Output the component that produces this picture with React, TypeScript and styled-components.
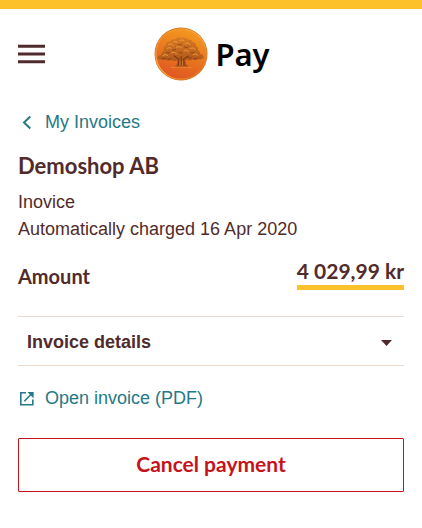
import React from "react";
import styled, { createGlobalStyle } from "styled-components";

const color = {
  brown: "#512b2b",
  teal: "#257886",
  yellow: "#fdc12b",
  sand: "#ebd9cc",
  red: "#c5131c",
};

const heading = `"Lato", "Open Sans", sans-serif`;
const body = `"Liberation Sans", Arial, sans-serif`;

const GlobalStyle = createGlobalStyle`
  *, *::before, *::after { box-sizing: border-box; }
  body {
    margin: 0;
    background: #fff;
    color: ${color.brown};
    font-family: ${body};
    font-size: 18px;
    line-height: 27px;
  }
`;

const Page = styled.div`
  border-top: 9px solid ${color.yellow};
`;

const Header = styled.header`
  display: grid;
  grid-template-columns: 28px 1fr 26px;
  align-items: center;
  padding: 18px 18px 0;
`;

const MenuButton = styled.button`
  display: flex;
  padding: 0;
  border: 0;
  background: none;
  cursor: pointer;
`;

const Brand = styled.a`
  display: flex;
  align-items: center;
  justify-content: center;
  gap: 7px;
  color: #000;
  font: 600 31px/54px "Noto Sans", "Open Sans", sans-serif;
  text-decoration: none;
`;

const Main = styled.main`
  padding: 28px 18px 36px;
`;

const IconLink = styled.a`
  display: flex;
  align-items: center;
  gap: 9px;
  width: fit-content;
  color: ${color.teal};
  text-decoration: none;
`;

const Title = styled.h1`
  margin: 16px 0 9px;
  font: 700 22px/28px ${heading};
`;

const Text = styled.p`
  margin: 0;
`;

const AmountRow = styled.dl`
  display: flex;
  align-items: center;
  justify-content: space-between;
  margin: 14px 0 26px;
  font: 700 21px/27px ${heading};
`;

const AmountLabel = styled.dt`
  padding-top: 6px;
  font-size: 20px;
`;

const AmountValue = styled.dd`
  margin: 0;
  padding-bottom: 1px;
  border-bottom: 5px solid ${color.yellow};
`;

const DetailsButton = styled.button`
  display: flex;
  align-items: center;
  justify-content: space-between;
  width: 100%;
  margin-bottom: 19px;
  padding: 12px 12px 9px 9px;
  border: 1px solid ${color.sand};
  border-width: 1px 0;
  background: none;
  color: inherit;
  font: 700 18px/27px ${body};
  cursor: pointer;
`;

const CancelButton = styled.button`
  width: 100%;
  margin-top: 26px;
  padding: 11px 12px 13px;
  border: 1px solid ${color.red};
  border-radius: 1px;
  background: none;
  color: ${color.red};
  font: 700 21px/28px ${heading};
  cursor: pointer;
`;

const MenuIcon = () => (
  <svg width="27" height="20" viewBox="0 0 27 20" fill={color.brown} aria-hidden="true">
    <path d="M0 .7h27v3H0zM0 8.400h27v3H0zM0 16.200h27v3H0z" />
  </svg>
);

const OakCoin = () => (
  <svg width="54" height="54" viewBox="0 0 54 54" aria-hidden="true">
    <defs>
      <linearGradient id="coin" x1=".65" y1="0" x2=".35" y2="1">
        <stop offset="0" stopColor="#f39a1f" />
        <stop offset=".5" stopColor="#ea781f" />
        <stop offset="1" stopColor="#de5522" />
      </linearGradient>
      <linearGradient id="rim" x1="0" y1="0" x2="1" y2="1">
        <stop offset="0" stopColor="#e58a2a" />
        <stop offset=".5" stopColor="#f9ae48" />
        <stop offset="1" stopColor="#d5601f" />
      </linearGradient>
      <linearGradient id="leaf" x1="0" y1="0" x2="0" y2="1">
        <stop offset="0" stopColor="#d87a22" />
        <stop offset="1" stopColor="#a9501a" />
      </linearGradient>
    </defs>
    <circle cx="27" cy="27" r="26.500" fill="#d9731c" />
    <circle cx="27" cy="27" r="25.200" fill="url(#coin)" stroke="url(#rim)" strokeWidth="1.200" />
    <path
      d="M3.500 31c-.2-2 2.300-3 4-3.400-.4-2 .8-3.400 2.300-3.900-.5-2.500.2-4.500 1.900-5.300-.2-2.800 1.800-4.300 4.200-3.600 1-2.300 3.300-3.200 5.200-2.300 1.500-2.300 4.500-2.900 6.500-1.500 2.400-1.200 5.300-.4 6.300 1.600 2.400-.6 4.300.7 4.700 2.700 2.400 0 3.600 1.600 3.300 3.700 2 .7 2.600 2.400 1.900 4.200 1.800.7 2.600 2 2.200 3.600 2.600.6 4.200 2.200 3.600 4-1.200 1.700-3.800 2-5.600 1.300-1.700 1.300-4 1.400-5.500.4-1.700 1.200-3.700 1.200-5.300.3l-1.600.5.300 3.500 2.800 3H20.500l2.700-3 .1-3.400c-2.200.9-4.600.7-6.200-.3-2 1.100-4.500.8-6-.4-2.400.5-6.600.4-7.600-1.700z"
      fill="url(#leaf)"
    />
    <g fill="none" strokeLinecap="round">
      <path
        d="M9 28.500c2-1.400 4-1 5 .4M13 21.500c2-1.400 4.500-.8 5 1M14.500 17.500c2-1.300 4-.6 4.700 1M19.500 15c2-1 3.500-.5 4 .8M26 13.500c1.700-1 4-.7 4.600.6M31.500 16.500c1.700-1 3.700-.4 4.300 1M36.500 21.500c2-1.200 4-.4 4.500 1M39 27.500c2-1.300 4-.6 4.800.8M22.500 20.500c1.500-1.500 4-1.200 5 .4M30 24c2-1.400 4-.6 4.600 1M17.500 26c2-1.500 4-.8 4.800.8"
        stroke="#f0a044"
        strokeWidth=".9"
      />
      <path
        d="M8 31.300c1.500.6 3 .5 4-.2M14 31.800c1.400.7 2.600.5 3.600-.2M18 22.600c1.200.9 2.700.7 3.700-.2M24 17.400c1.200.8 2.600.6 3.500-.2M30.500 20c1.300.9 3 .6 3.800-.4M34 30.500c1.600.8 3 .5 4-.4M40 31.500c1.500.5 3 .3 4-.4M37 25.700c1.400.7 2.700.5 3.600-.3M12.500 25.500c1.400.7 2.700.5 3.400-.4M25 25.500c1.300.8 2.600.6 3.400-.3"
        stroke="#8a451a"
        strokeWidth="1"
      />
      <path d="M24.500 38l.2-6-4.500-3M30 38l-.3-6 4.700-3M27.200 37.500v-8" stroke="#803813" strokeWidth="1.200" />
      <path d="M26 38v-4M28.600 38v-4" stroke="#eb9a42" strokeWidth=".6" />
      <path d="M17 40.300h20" stroke="#f0a040" strokeWidth=".5" />
    </g>
  </svg>
);

const BackIcon = () => (
  <svg width="18" height="18" viewBox="0 0 18 18" fill="none" stroke={color.teal} strokeWidth="2" aria-hidden="true">
    <path d="M12.300 2.500L6 8.500l6.300 6" />
  </svg>
);

const ExternalIcon = () => (
  <svg width="18" height="18" viewBox="0 0 18 18" fill="none" stroke={color.teal} strokeWidth="1.600" aria-hidden="true">
    <path d="M8 2.800H2.800v11.900h12V9.500M6.300 11.300L14 3.500" />
    <path d="M9.300 2h6.300v6.300z" fill={color.teal} stroke="none" />
  </svg>
);

const CaretIcon = () => (
  <svg width="11" height="6" viewBox="0 0 11 6" fill={color.brown} aria-hidden="true">
    <path d="M0 0h11L5.500 6z" />
  </svg>
);

export default function App() {
  return (
    <>
      <GlobalStyle />
      <Page>
        <Header>
          <MenuButton type="button" aria-label="Menu">
            <MenuIcon />
          </MenuButton>
          <Brand href="#">
            <OakCoin />
            Pay
          </Brand>
        </Header>
        <Main>
          <IconLink href="#invoices">
            <BackIcon />
            My Invoices
          </IconLink>
          <Title>Demoshop AB</Title>
          <Text>Inovice</Text>
          <Text>Automatically charged 16 Apr 2020</Text>
          <AmountRow>
            <AmountLabel>Amount</AmountLabel>
            <AmountValue>4 029,99 kr</AmountValue>
          </AmountRow>
          <DetailsButton type="button" aria-expanded="false">
            Invoice details
            <CaretIcon />
          </DetailsButton>
          <IconLink href="#pdf">
            <ExternalIcon />
            Open invoice (PDF)
          </IconLink>
          <CancelButton type="button">Cancel payment</CancelButton>
        </Main>
      </Page>
    </>
  );
}
